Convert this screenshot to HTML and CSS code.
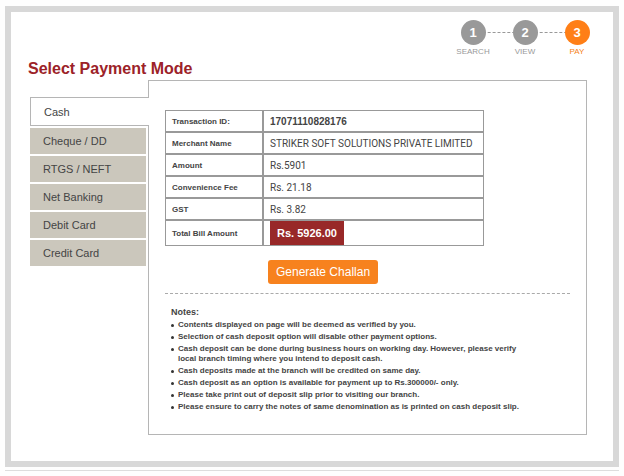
FILE: index.html
```html
<!DOCTYPE html>
<html lang="en">
<head>
<meta charset="utf-8">
<title>Select Payment Mode</title>
<link rel="stylesheet" href="styles.css">
</head>
<body>
<main class="frame">
  <ol class="steps">
    <li class="step"><span class="step-dot">1</span><span class="step-name">SEARCH</span></li>
    <li class="step"><span class="step-dot">2</span><span class="step-name">VIEW</span></li>
    <li class="step step-current"><span class="step-dot">3</span><span class="step-name">PAY</span></li>
  </ol>
  <h1 class="title">Select Payment Mode</h1>
  <div class="content">
    <nav class="tabs">
      <button class="tab tab-active" type="button">Cash</button>
      <button class="tab" type="button">Cheque / DD</button>
      <button class="tab" type="button">RTGS / NEFT</button>
      <button class="tab" type="button">Net Banking</button>
      <button class="tab" type="button">Debit Card</button>
      <button class="tab" type="button">Credit Card</button>
    </nav>
    <section class="panel">
      <table class="bill">
        <tr><th scope="row">Transaction ID:</th><td><strong>17071110828176</strong></td></tr>
        <tr><th scope="row">Merchant Name</th><td>STRIKER SOFT SOLUTIONS PRIVATE LIMITED</td></tr>
        <tr><th scope="row">Amount</th><td>Rs.5901</td></tr>
        <tr><th scope="row">Convenience Fee</th><td>Rs. 21.18</td></tr>
        <tr><th scope="row">GST</th><td>Rs. 3.82</td></tr>
        <tr class="total-row"><th scope="row">Total Bill Amount</th><td><span class="total">Rs. 5926.00</span></td></tr>
      </table>
      <button class="generate" type="button">Generate Challan</button>
      <div class="notes">
        <h2 class="notes-title">Notes:</h2>
        <ul class="notes-list">
          <li>Contents displayed on page will be deemed as verified by you.</li>
          <li>Selection of cash deposit option will disable other payment options.</li>
          <li>Cash deposit can be done during business hours on working day. However, please verify local branch timing where you intend to deposit cash.</li>
          <li>Cash deposits made at the branch will be credited on same day.</li>
          <li>Cash deposit as an option is available for payment up to Rs.300000/- only.</li>
          <li>Please take print out of deposit slip prior to visiting our branch.</li>
          <li>Please ensure to carry the notes of same denomination as is printed on cash deposit slip.</li>
        </ul>
      </div>
    </section>
  </div>
</main>
<hr class="rule">
</body>
</html>
```
FILE: styles.css
```css
* {
  box-sizing: border-box;
}

body {
  margin: 0;
  padding: 6px 5px 0;
  background: #fefefe;
  color: #444;
  font-family: "Liberation Sans", Arial, sans-serif;
}

.frame {
  padding: 8px 26px 26px 17px;
  border: 6px solid #d8d8d8;
  background: #fff;
}

.steps {
  display: flex;
  justify-content: flex-end;
  margin: 0 -16px 0 0;
  padding: 0;
  list-style: none;
}

.step {
  position: relative;
  display: flex;
  flex-direction: column;
  align-items: center;
  width: 52px;
  color: #999;
}

.step + .step::before {
  content: "";
  position: absolute;
  top: 12px;
  right: 50%;
  width: 100%;
  border-top: 1px dashed #999;
}

.step:nth-child(1) { z-index: 3; }
.step:nth-child(2) { z-index: 2; }

.step-dot {
  position: relative;
  width: 25px;
  height: 25px;
  border-radius: 50%;
  background: #999;
  color: #fff;
  font-size: 13px;
  font-weight: 700;
  line-height: 25px;
  text-align: center;
}

.step-name {
  margin-top: 2px;
  font-size: 8px;
  line-height: 10px;
}

.step-current {
  color: #f58220;
}

.step-current .step-dot {
  background: #ff7f17;
}

.title {
  margin: 2px 0 0;
  color: #9c2228;
  font-size: 16px;
  font-weight: 700;
  line-height: 20px;
}

.content {
  display: flex;
  align-items: flex-start;
  margin-top: 1px;
  padding-left: 2px;
}

.tabs {
  position: relative;
  display: flex;
  flex-direction: column;
  gap: 2px;
  width: 119px;
  margin: 17px -1px 0 0;
}

.tab {
  height: 26px;
  margin-right: 3px;
  padding: 0 0 0 13px;
  border: 0;
  background: #cbc7bc;
  color: #444;
  font-family: inherit;
  font-size: 11px;
  text-align: left;
}

.tab-active {
  height: 29px;
  margin-right: 0;
  border: 1px solid #b5b5b5;
  border-right: 0;
  background: #fff;
}

.panel {
  flex: 1;
  padding: 29px 16px 22px;
  border: 1px solid #b5b5b5;
}

.bill {
  width: 319px;
  border: 0;
  border-spacing: 0;
}

.bill th,
.bill td {
  height: 22px;
  padding: 0 0 0 6px;
  border: 1px solid #999;
  text-align: left;
  white-space: nowrap;
}

.bill th {
  width: 98px;
  font-size: 8px;
}

.bill td {
  font-family: Roboto, Arial, sans-serif;
  font-size: 10px;
}

.bill strong,
.bill .total {
  font-family: "Liberation Sans", Arial, sans-serif;
}

.bill .total-row th,
.bill .total-row td {
  height: 26px;
}

.total {
  display: block;
  width: max-content;
  padding: 0 7px;
  background: #982828;
  color: #fff;
  font-size: 11px;
  font-weight: 700;
  line-height: 24px;
}

.generate {
  display: block;
  height: 24px;
  margin: 14px 0 0 103px;
  padding: 0 8px;
  border: 0;
  border-radius: 3px;
  background: #f7821e;
  color: #fff;
  font-family: inherit;
  font-size: 12px;
}

.notes {
  margin-top: 9px;
  padding: 12px 36px 0 6px;
  border-top: 1px dashed #aaa;
}

.notes-title {
  margin: 0;
  font-size: 9px;
  line-height: 12px;
}

.notes-list {
  display: flex;
  flex-direction: column;
  gap: 2px;
  margin: 2px 0 0;
  padding: 0;
  list-style: none;
  font-size: 8px;
  font-weight: 700;
  line-height: 10px;
}

.notes-list li {
  position: relative;
  padding-left: 7px;
}

.notes-list li::before {
  content: "";
  position: absolute;
  top: 4px;
  left: 0;
  width: 3px;
  height: 3px;
  border-radius: 50%;
  background: #333;
}

.rule {
  margin: 3px 0 0;
  border: 0;
  border-top: 1px solid #ddd;
}
```
